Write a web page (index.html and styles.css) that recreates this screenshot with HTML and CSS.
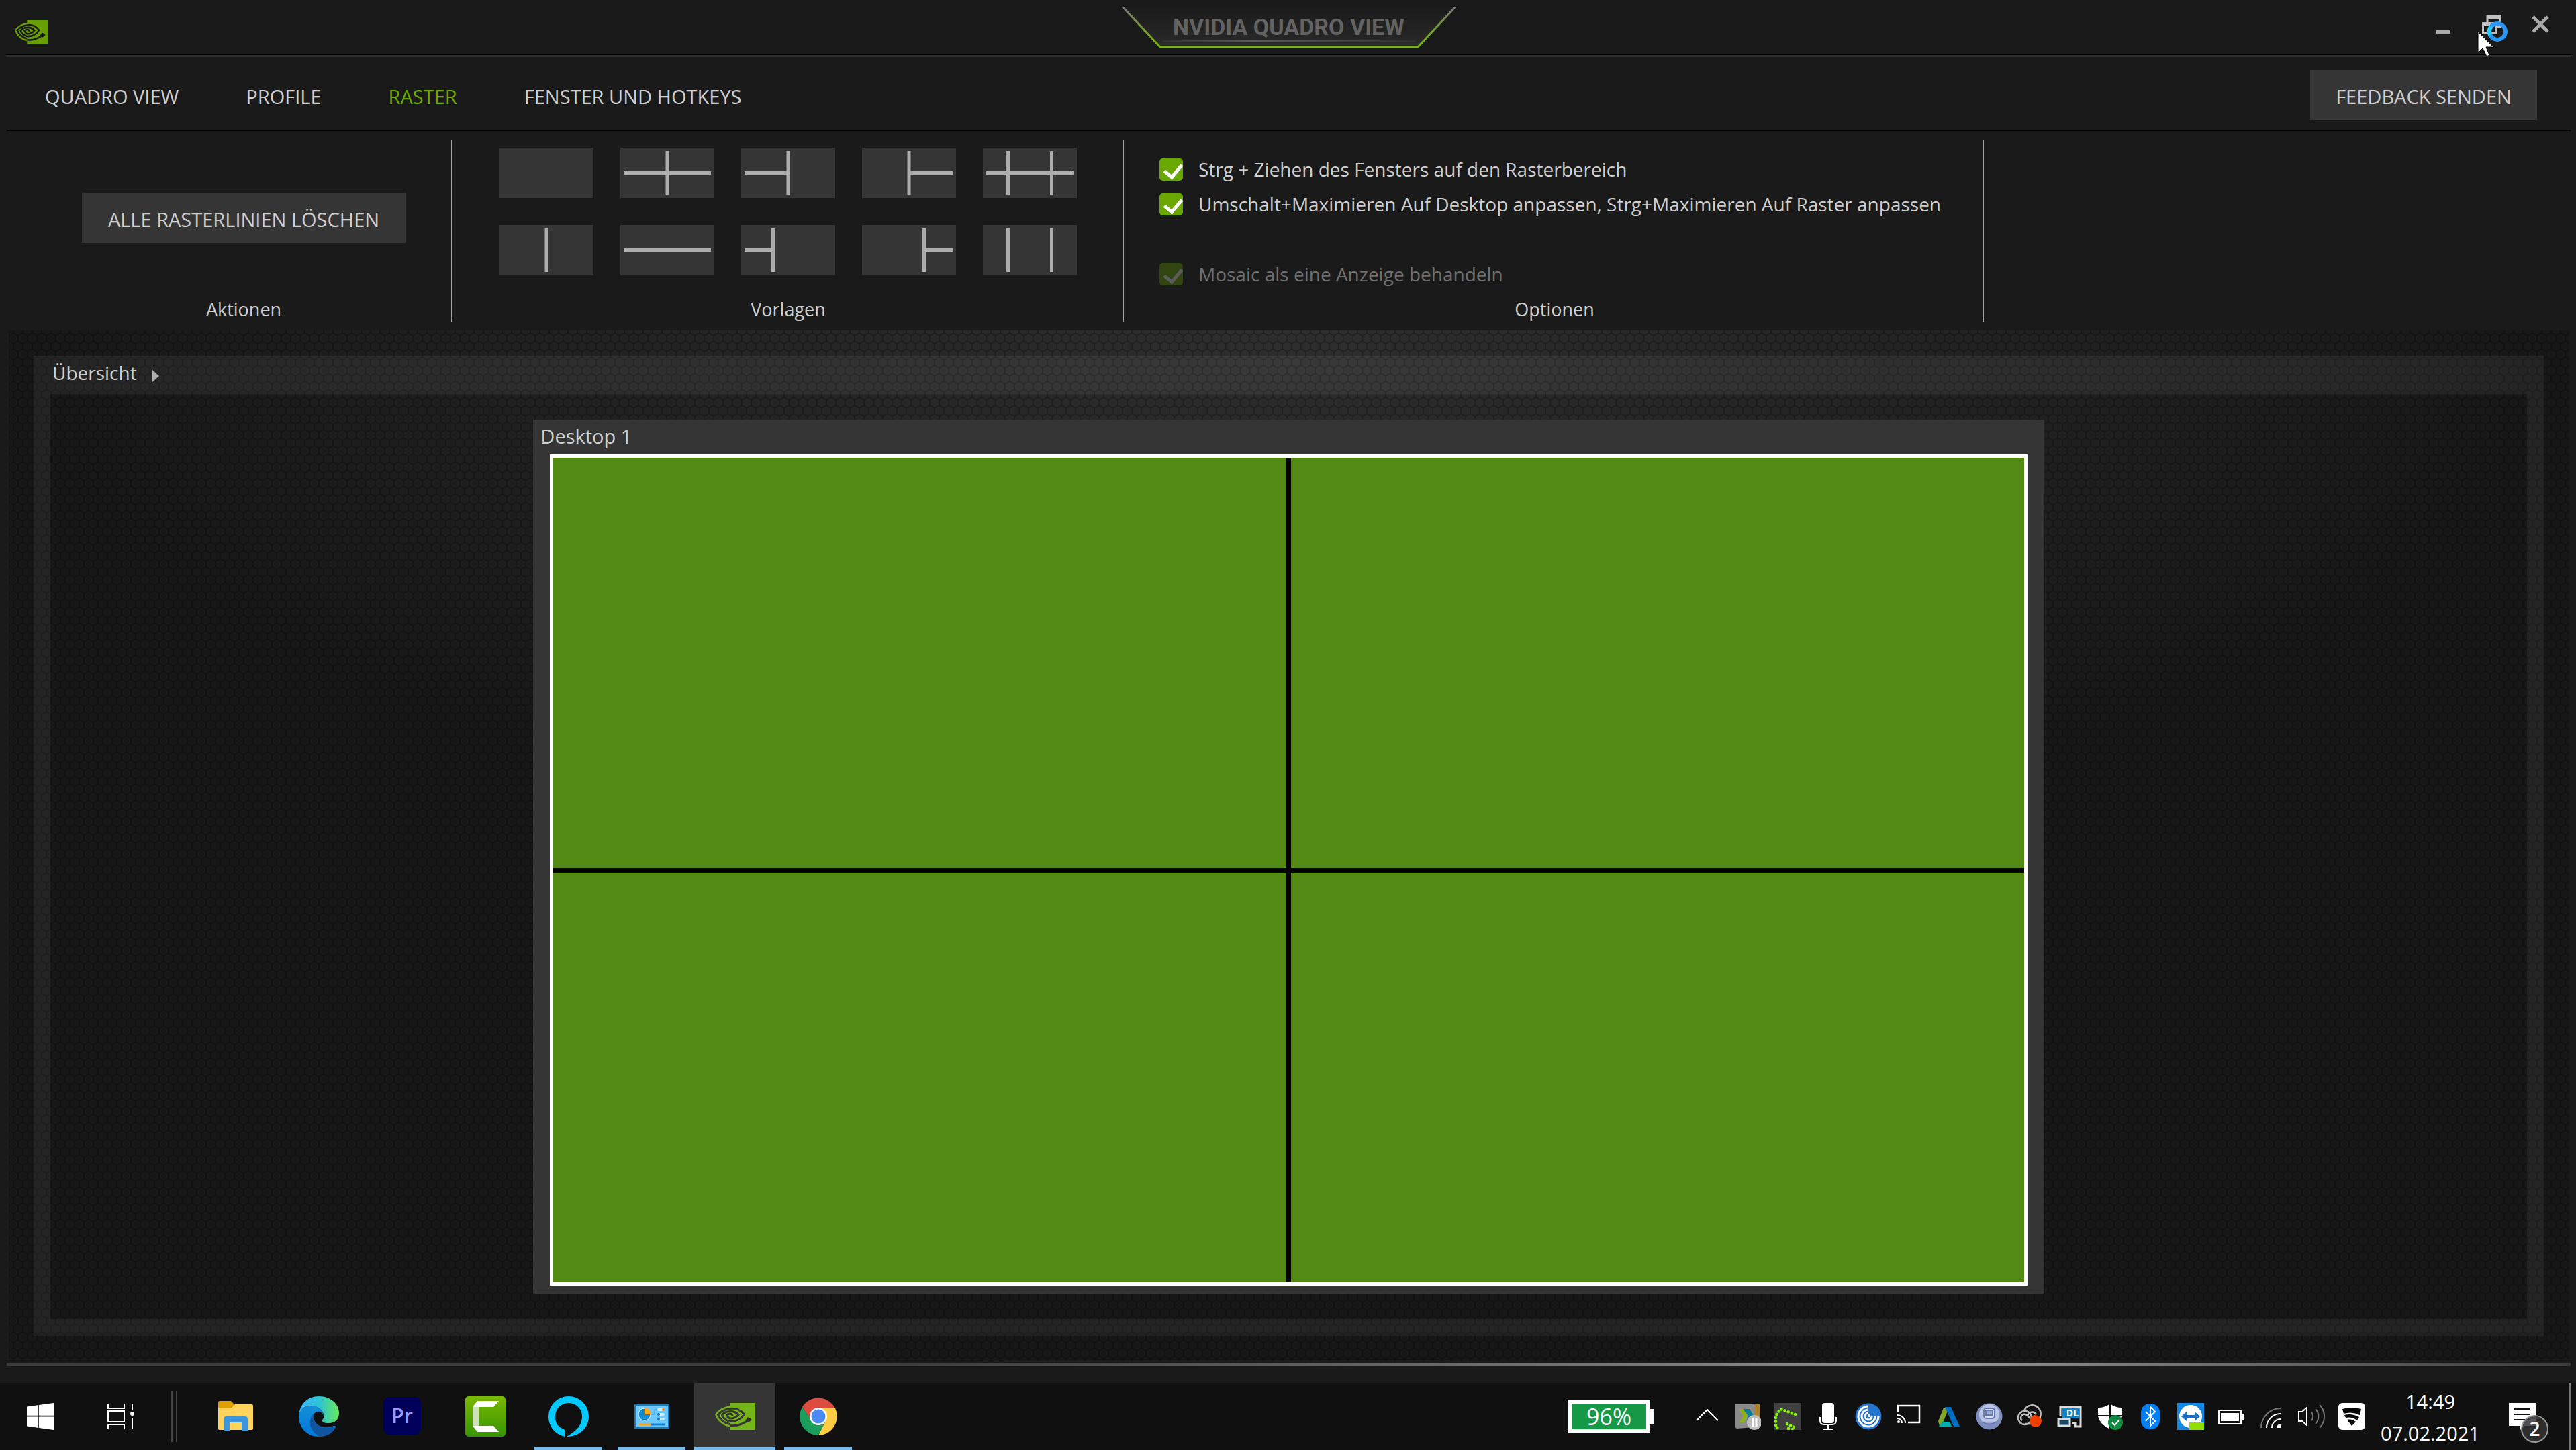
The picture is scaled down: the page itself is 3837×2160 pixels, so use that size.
FILE: index.html
```html
<!DOCTYPE html>
<html lang="de">
<head>
  <meta charset="UTF-8">
  <title>NVIDIA Quadro View</title>
  <link rel="stylesheet" href="styles.css">
</head>
<body>

<!-- shared shapes -->
<svg class="defs" aria-hidden="true">
  <symbol id="eye" viewBox="0 0 60 40">
    <path fill="currentColor" d="M22 0H60V40H22V35.500C11 34 3 26 0 17C5 10 12 5.500 22 4.500Z"/>
    <path class="eye-cut" d="M22 8.500C14 9.500 8 13 4.500 17.500C8 25 14 30 22 31.500M22 8.500C31 7 39 11 43.500 17C38 25 31 28 22 27.500C16 26 12 22 10.500 18C13 14.500 17 12.500 22 12.500C28 12 32 14 35 17.500C31 22 27 23.500 22 23C19 21.500 18 20 17.500 18C19 16.500 20.500 16 22 16C25 16 26 17.500 26 19"/>
    <path class="eye-cut" d="M22 33.500C33 35 43 31 53 23.500"/>
    <path class="eye-fill" d="M49 21L55 25L50 29L45 26Z"/>
  </symbol>
</svg>

<div class="window">
  <header class="titlebar">
    <svg class="app-logo" viewBox="0 0 60 40" preserveAspectRatio="none"><use href="#eye"/></svg>
    <div class="title-tab">
      <svg class="title-frame" viewBox="0 0 500 64">
        <defs>
          <linearGradient id="frame" x1="0" y1="0" x2="0" y2="1">
            <stop offset="0" stop-color="#777"/>
            <stop offset="1" stop-color="#76b900"/>
          </linearGradient>
          <linearGradient id="tabBg" x1="0" y1="0" x2="0" y2="1">
            <stop offset="0" stop-color="#1a1a1a"/>
            <stop offset="1" stop-color="#2a2a2a"/>
          </linearGradient>
          <linearGradient id="shine">
            <stop offset="0" stop-color="#303030"/>
            <stop offset=".35" stop-color="#5c5c5c"/>
            <stop offset="1" stop-color="#303030"/>
          </linearGradient>
        </defs>
        <path d="M2 0L58 60H442L498 0Z" fill="url(#tabBg)"/>
        <path d="M2 0L58 60H442L498 0" fill="none" stroke="url(#frame)" stroke-width="3"/>
        <rect x="61" y="50" width="378" height="3" fill="url(#shine)"/>
      </svg>
      <h1>NVIDIA QUADRO VIEW</h1>
    </div>
    <div class="window-buttons">
      <button aria-label="Minimieren"><svg viewBox="0 0 40 40"><path d="M12 31.500H32" stroke="#aaa" stroke-width="5"/></svg></button>
      <button aria-label="Verkleinern"><svg viewBox="0 0 40 40"><path d="M15 7V17M34.500 7V24H29" fill="none" stroke="#c0c0c0" stroke-width="3"/><path d="M14 9.500H36M7 19.500H29" stroke="#c0c0c0" stroke-width="5"/><path d="M8.500 19V32.500H27.500V19" fill="none" stroke="#c0c0c0" stroke-width="3"/></svg></button>
      <button aria-label="Schließen"><svg viewBox="0 0 40 40"><path d="M10 9L32 31M32 9L10 31" stroke="#aaa" stroke-width="5"/></svg></button>
    </div>
  </header>

  <nav class="menubar">
    <a href="#">QUADRO VIEW</a>
    <a href="#">PROFILE</a>
    <a href="#" class="active">RASTER</a>
    <a href="#">FENSTER UND HOTKEYS</a>
    <button class="btn feedback">FEEDBACK SENDEN</button>
  </nav>

  <div class="ribbon">
    <section class="group actions">
      <div class="group-body">
        <button class="btn clear">ALLE RASTERLINIEN LÖSCHEN</button>
      </div>
      <h2>Aktionen</h2>
    </section>

    <section class="group templates">
      <div class="group-body">
        <button aria-label="Leer"><svg viewBox="0 0 140 75"></svg></button>
        <button aria-label="2 x 2"><svg viewBox="0 0 140 75"><path d="M5 37.500H135M70 5V70"/></svg></button>
        <button aria-label="Links geteilt"><svg viewBox="0 0 140 75"><path d="M5 37.500H70M70 5V70"/></svg></button>
        <button aria-label="Rechts geteilt"><svg viewBox="0 0 140 75"><path d="M70 37.500H135M70 5V70"/></svg></button>
        <button aria-label="3 x 2"><svg viewBox="0 0 140 75"><path d="M5 37.500H135M37.500 5V70M102.500 5V70"/></svg></button>
        <button aria-label="2 Spalten"><svg viewBox="0 0 140 75"><path d="M70 5V70"/></svg></button>
        <button aria-label="2 Zeilen"><svg viewBox="0 0 140 75"><path d="M5 37.500H135"/></svg></button>
        <button aria-label="Schmal links geteilt"><svg viewBox="0 0 140 75"><path d="M5 37.500H48M47.500 5V70"/></svg></button>
        <button aria-label="Schmal rechts geteilt"><svg viewBox="0 0 140 75"><path d="M92 37.500H135M92.500 5V70"/></svg></button>
        <button aria-label="3 Spalten"><svg viewBox="0 0 140 75"><path d="M37.500 5V70M102.500 5V70"/></svg></button>
      </div>
      <h2>Vorlagen</h2>
    </section>

    <section class="group options">
      <div class="group-body">
        <label><input type="checkbox" checked>Strg + Ziehen des Fensters auf den Rasterbereich</label>
        <label><input type="checkbox" checked>Umschalt+Maximieren Auf Desktop anpassen, Strg+Maximieren Auf Raster anpassen</label>
        <label class="disabled"><input type="checkbox" checked disabled>Mosaic als eine Anzeige behandeln</label>
      </div>
      <h2>Optionen</h2>
    </section>
  </div>

  <main class="workspace">
    <svg class="mesh" aria-hidden="true">
      <defs>
        <pattern id="hex" width="14" height="24" patternUnits="userSpaceOnUse">
          <path d="M7 -4V4L0 8V16L7 20V28M7 4L14 8V16L7 20" fill="none" stroke="#000" stroke-opacity=".24" stroke-width="2"/>
        </pattern>
      </defs>
      <rect width="100%" height="100%" fill="url(#hex)"/>
    </svg>
    <div class="panel">
      <button class="overview">Übersicht <svg viewBox="0 0 12 20"><path d="M0 0L11 10L0 20Z" fill="#b0b0b0"/></svg></button>
      <div class="stage">
        <div class="display">
          <h3>Desktop 1</h3>
          <div class="grid">
            <div></div><div></div><div></div><div></div>
          </div>
        </div>
      </div>
    </div>
  </main>
  <div class="status-line"></div>
</div>

<footer class="taskbar">
  <button class="start" aria-label="Start"><svg viewBox="0 0 40 40"><path fill="#fff" d="M0 5.500L16 3.300V18.800H0ZM17.800 3L40 0V18.800H17.800ZM0 20.400H16V36.700L0 34.500ZM17.800 20.400H40V40L17.800 37Z"/></svg></button>
  <button class="start" aria-label="Aktive Anwendungen"><svg viewBox="0 0 40 40"><g fill="none" stroke="#fff" stroke-width="2"><path d="M1 1V8H25V1M1 39V32H25V39M1 12H25V28H1ZM37 1V10M37 22V39"/></g><circle cx="37" cy="16" r="3" fill="#fff"/></svg></button>
  <span class="divider"></span>

  <div class="apps">
    <button aria-label="Explorer"><svg viewBox="0 0 60 60">
      <path d="M4 9Q4 7 6 7H23L28 12V18H4Z" fill="#e0a000"/>
      <path d="M4 17H24L29 12H54Q56 12 56 14V48Q56 50 54 50H6Q4 50 4 48Z" fill="#ffd35c"/>
      <path d="M12 52V34Q12 30 16 30H44Q48 30 48 34V52H39V39H21V52Z" fill="#3c96de"/></svg></button>
    <button aria-label="Edge"><svg viewBox="0 0 60 60">
      <defs>
        <linearGradient id="edgeTop"><stop offset="0" stop-color="#3cb8ff"/><stop offset=".5" stop-color="#2cc3d5"/><stop offset="1" stop-color="#6ae85c"/></linearGradient>
        <linearGradient id="edgeBlue" x1="0" y1="0" x2="0" y2="1"><stop offset="0" stop-color="#168fd8"/><stop offset="1" stop-color="#0078dc"/></linearGradient>
      </defs>
      <path d="M0 30C1 12 13 0 30 0C47 0 60 11 60 25C60 35 53 40 45 40C37 40 33 38 36 34C38 31 38 28 36 24C33 18 25 14 17 14C8 14 2 20 0 30Z" fill="url(#edgeTop)"/>
      <path d="M0 30C2 19 9 14 18 14C28 14 36 20 37 29C33 19 22 22 22 30C22 41 32 48 44 46C50 45 55 42 55 46C50 55 40 60 30 60C13 60 0 47 0 30Z" fill="url(#edgeBlue)"/>
      <path d="M23 25C13 34 15 51 31 60C42 60 50 55 55 46Q56 44 53 45C37 50 22 42 22 31Z" fill="#0f559f"/></svg></button>
    <button aria-label="Premiere Pro"><svg viewBox="0 0 60 60">
      <rect x="2" y="1" width="56" height="56" rx="9" fill="#00005b"/>
      <text x="30" y="40" class="pr">Pr</text></svg></button>
    <button aria-label="Camtasia"><svg viewBox="0 0 60 60">
      <defs><linearGradient id="cam" x1="0" y1="0" x2="0" y2="1"><stop offset="0" stop-color="#7aba00"/><stop offset="1" stop-color="#369400"/></linearGradient></defs>
      <rect width="60" height="60" rx="5" fill="url(#cam)"/>
      <path d="M11 16H20V44H11Z" fill="#cbe3b5"/>
      <path d="M11 16L18 7H50L42 16ZM11 44H42L50 53H18Z" fill="#fff"/></svg></button>
    <button class="running" aria-label="Alexa"><svg viewBox="0 0 60 60">
      <path fill="#00caff" fill-rule="evenodd" d="M30 0A30 30 0 0 1 60 30C60 47 46 60 27 60C35 55 50 47 50 30A20 20 0 0 0 10 30C10 42 16 46 21 48Q25 50 25 53V60C10 57 0 45 0 30A30 30 0 0 1 30 0Z"/></svg></button>
    <button class="running" aria-label="Systemsteuerung"><svg viewBox="0 0 60 60">
      <rect x="5" y="13" width="50" height="34" fill="#6cc8ff" stroke="#1b79b6" stroke-width="2"/>
      <circle cx="19" cy="27" r="9" fill="#1587cc" stroke="#d8f1ff"/>
      <path d="M19 27V17A10 10 0 0 1 29 27Z" fill="#ffa91f"/>
      <path d="M29 27H34V20H40" fill="none" stroke="#3893ca"/>
      <g fill="#ccecff"><rect x="38" y="18" width="11" height="4" rx="2"/><rect x="38" y="25" width="11" height="4" rx="2"/><rect x="38" y="32" width="11" height="4" rx="2"/></g>
      <circle cx="47" cy="20" r="2" fill="#f07c10"/><circle cx="40" cy="27" r="2" fill="#1677b9"/><circle cx="40" cy="34" r="2" fill="#1677b9"/>
      <path d="M11 42H29" stroke="#ffa91f" stroke-width="3"/><path d="M29 42H49" stroke="#1587dc" stroke-width="3"/></svg></button>
    <button class="running current" aria-label="NVIDIA Quadro View"><svg class="eye-icon" viewBox="0 0 60 40"><use href="#eye"/></svg></button>
    <button class="running" aria-label="Chrome"><svg viewBox="0 0 60 60">
      <path d="M6 16A28 28 0 0 1 55 18H30V30L19 36Z" fill="#dd4b3e"/>
      <path d="M30 18H55A28 28 0 0 1 30 58L41 36Z" fill="#ffcd41"/>
      <path d="M6 16A28 28 0 0 0 30 58L41 36L19 36Z" fill="#1a9e5c"/>
      <circle cx="30" cy="30" r="13" fill="#fff"/><circle cx="30" cy="30" r="10.500" fill="#4a8af4"/></svg></button>
  </div>

  <div class="tray">
    <div class="battery"><span>96%</span></div>
    <div class="tray-icons">
      <svg viewBox="0 0 40 40"><path d="M4 26L20 10L36 26" fill="none" stroke="#fff" stroke-width="2"/></svg>
      <svg viewBox="0 0 40 40"><path d="M28 2H38V26H28Z" fill="#ad842f"/><path d="M1 1H30V36L4 38L1 36Z" fill="#8b8b8b"/><path d="M7 9H15L20 19L15 29H8L13 19Z" fill="#8eaf20"/><path d="M13 9H23L29 19L27 25H19L21 19L17 14Z" fill="#087e9b"/><circle cx="30" cy="29" r="11" fill="#c0c0c0"/><path d="M28 23V35M33 23V35" stroke="#fff" stroke-width="3"/></svg>
      <svg viewBox="0 0 40 40"><rect width="40" height="40" fill="#404040"/><path d="M31 17L9 9L2 19V36L9 39M19 31L29 36M21 38L28 40" fill="none" stroke="#84f500" stroke-width="4.500" stroke-linecap="round" stroke-dasharray=".1 5.400"/></svg>
      <svg viewBox="0 0 40 40"><rect x="11" width="18" height="30" rx="4" fill="#fff"/><path d="M8 21V26Q8 32 14 32H26Q32 32 32 26V21M20 32V39M13 39H27" fill="none" stroke="#fff" stroke-width="2"/></svg>
      <svg viewBox="0 0 40 40"><circle cx="20" cy="20" r="19.500" fill="#2375ce"/><path d="M20 5A15 15 0 1 0 35 20M20 10A10 10 0 1 0 30 20M20 15A5 5 0 1 0 25 20" fill="none" stroke="#fff" stroke-width="3"/><circle cx="21" cy="19" r="2" fill="#fff"/></svg>
      <svg viewBox="0 0 40 40"><path d="M4 14V4H36V29H19" fill="none" stroke="#fff" stroke-width="2.500"/><path d="M3 18A12 12 0 0 1 15 30M3 23A7 7 0 0 1 10 30" fill="none" stroke="#fff" stroke-width="2"/><circle cx="5" cy="28" r="2" fill="#fff"/></svg>
      <svg viewBox="0 0 40 40"><path d="M4 27L12 7H20L12 27L6 34Z" fill="#83a72d"/><path d="M14 6H23L36 35H27Z" fill="#006dc0"/><path d="M5 35L10 28H21L24 35Z" fill="#00afad"/></svg>
      <svg viewBox="0 0 40 40"><circle cx="20" cy="20" r="19.500" fill="#7f8fc0"/><circle cx="20" cy="17" r="15" fill="#b9c3e2"/><rect x="12" y="8" width="16" height="15" rx="4" fill="#dbe1f4" stroke="#6577ae" stroke-width="2"/><path d="M15 11H25V18H15ZM9 28Q20 35 31 28" fill="#a0aed7" stroke="#6577ae" stroke-width="2"/></svg>
      <svg viewBox="0 0 40 40"><g fill="none" stroke="#bebebe" stroke-width="2.500"><circle cx="13" cy="22" r="10"/><path d="M12 12A12 12 0 0 1 36 20A12 12 0 0 1 28 31H13"/><path d="M9 26A5 5 0 0 1 9 18Q13 15 17 19L25 27M17 20A7 7 0 0 1 30 17"/></g><circle cx="29" cy="27" r="9" fill="#ed4000"/></svg>
      <svg viewBox="0 0 40 40"><path d="M6 19V6H36V35H28V30H23" fill="none" stroke="#ddd" stroke-width="3"/><rect x="8" y="8" width="26" height="15" fill="#1582bf"/><text x="24" y="20" class="dl">DL</text><rect x="3" y="24" width="17" height="10" fill="#164464" stroke="#ddd" stroke-width="3"/></svg>
      <svg viewBox="0 0 40 40"><path d="M2 7Q13 7 20 1Q27 7 38 7V20Q35 32 20 39Q5 32 2 20Z" fill="#fff"/><path d="M20 1V39M2 19H38" stroke="#101010" stroke-width="2"/><circle cx="28" cy="29" r="11" fill="#128b42"/><path d="M23 29L27 33L34 25" fill="none" stroke="#fff" stroke-width="2"/></svg>
      <svg viewBox="0 0 40 40"><rect x="6" y="1" width="28" height="38" rx="13" fill="#007ff8"/><path d="M13 13L27 27L20 34V6L27 13L13 27" fill="none" stroke="#fff" stroke-width="2"/></svg>
      <svg viewBox="0 0 40 40"><rect width="40" height="40" fill="#1288e4"/><circle cx="20" cy="20" r="17" fill="#fff"/><path d="M6 20L14 13V18H26V13L34 20L26 27V22H14V27Z" fill="#196fc6"/><rect x="18" y="29" width="22" height="11" fill="#8fdf00"/></svg>
      <svg viewBox="0 0 40 40"><path d="M2 11H35V31H2Z" fill="none" stroke="#fff" stroke-width="2"/><path d="M5 15H32V27H5ZM36 17H39V25H36Z" fill="#fff"/></svg>
      <svg viewBox="0 0 40 40"><path d="M5 37A29 29 0 0 1 34 8" fill="none" stroke="#777" stroke-width="2"/><path d="M13 37A21 21 0 0 1 34 16M21 37A13 13 0 0 1 34 24" fill="none" stroke="#fff" stroke-width="2"/><path d="M28 37A6 6 0 0 1 34 31V37Z" fill="#fff"/></svg>
      <svg viewBox="0 0 40 40"><path d="M1 13H6L13 7V33L6 27H1Z" fill="none" stroke="#fff" stroke-width="2"/><path d="M20 14A9 9 0 0 1 20 26M26 9A16 16 0 0 1 26 31M32 3A24 24 0 0 1 32 37" fill="none" stroke="#777" stroke-width="2"/></svg>
      <svg viewBox="0 0 40 40"><rect width="40" height="40" rx="6" fill="#fff"/><path d="M6 9Q20 5 34 9L32 18Q20 12 8 16ZM9 18Q20 15 31 21L28 26Q20 20 11 22ZM13 25Q20 23 26 28L20 34Z" fill="#050505"/></svg>
    </div>
    <div class="clock"><time>14:49</time><span>07.02.2021</span></div>
    <button class="notify" aria-label="Benachrichtigungen">
      <svg viewBox="0 0 40 40"><path d="M0 0H40V34H24L17 40V34H0Z" fill="#fff"/><path d="M8 9H32M8 17H32M8 25H32" stroke="#101010" stroke-width="2"/></svg>
      <span class="badge">2</span>
    </button>
    <span class="show-desktop"></span>
  </div>
</footer>

<!-- busy pointer over the restore button -->
<svg class="pointer" viewBox="0 0 48 56">
  <circle cx="30" cy="17" r="12" fill="none" stroke="#2b95f4" stroke-width="6"/>
  <path d="M19 22A12 12 0 0 1 21 9" fill="none" stroke="#23cdff" stroke-width="6"/>
  <path d="M1 17V49L8 42L14 54L18 52L13 40H24Z" fill="#fff" stroke="#000"/>
</svg>

</body>
</html>
```
FILE: styles.css
```css
* {
  box-sizing: border-box;
}

body {
  margin: 0;
  min-height: 100vh;
  display: flex;
  flex-direction: column;
  font-family: "Open Sans", "Noto Sans", sans-serif;
  font-size: 29px;
  line-height: 40px;
  background: #1a1a1a;
  color: #cfcfcf;
}

button {
  font: inherit;
  color: inherit;
  background: none;
  border: none;
  padding: 0;
}

h1, h2, h3 {
  margin: 0;
  font-size: inherit;
  font-weight: normal;
}

svg {
  display: block;
}

.defs {
  position: absolute;
  width: 0;
  height: 0;
}

.eye-cut {
  fill: none;
  stroke: var(--cut, #1a1a1a);
  stroke-width: 3;
}

.eye-fill {
  fill: var(--cut, #1a1a1a);
}

.window {
  flex: 1;
  display: flex;
  flex-direction: column;
  padding: 0 8px 25px 10px;
}

/* Title bar */
.titlebar {
  display: grid;
  grid-template-columns: 1fr auto 1fr;
  height: 85px;
  border-bottom: 3px solid #292929;
  box-shadow: inset 0 -2px #000;
}

.app-logo {
  width: 50px;
  height: 35px;
  margin: 30px 0 0 12px;
  color: #679e00;
}

.title-tab {
  display: grid;
  padding-top: 10px;
}

.title-frame,
.title-tab h1 {
  grid-area: 1 / 1;
}

.title-frame {
  width: 500px;
  height: 64px;
}

.title-tab h1 {
  padding-top: 10px;
  font-family: Roboto, sans-serif;
  font-size: 34px;
  font-weight: bold;
  text-align: center;
  color: #636363;
}

.window-buttons {
  display: flex;
  justify-content: flex-end;
  align-items: flex-start;
  gap: 33px;
  padding: 16px 26px 0 0;
}

.window-buttons svg {
  width: 40px;
  height: 40px;
}

/* Menu */
.menubar {
  display: flex;
  align-items: center;
  gap: 100px;
  height: 110px;
  padding: 5px 50px 0 57px;
  border-bottom: 2px solid #000;
}

.menubar a {
  padding-top: 4px;
  color: inherit;
  text-decoration: none;
}

.menubar .active {
  color: #6aa800;
}

.btn {
  height: 75px;
  padding-top: 4px;
  background: #353535;
}

.feedback {
  width: 338px;
  margin-left: auto;
}

/* Ribbon */
.ribbon {
  display: flex;
  height: 297px;
  padding-top: 13px;
}

.group {
  display: flex;
  flex-direction: column;
  height: 271px;
  border-right: 2px solid #a5a5a5;
  text-align: center;
}

.group-body {
  height: 235px;
  flex-shrink: 0;
}

.group h2 {
  font-size: 27px;
  line-height: 36px;
}

.actions {
  width: 664px;
  padding-left: 44px;
}

.clear {
  width: 482px;
  margin-top: 79px;
}

.templates {
  width: 1000px;
  padding: 0 68px 0 70px;
}

.templates .group-body {
  display: grid;
  grid-template-columns: repeat(5, 140px);
  grid-auto-rows: 75px;
  gap: 40px;
  padding-top: 12px;
}

.templates button {
  background: #353535;
}

.templates svg {
  width: 140px;
  height: 75px;
  stroke: #adadad;
  stroke-width: 5;
}

.options {
  width: 1281px;
  padding: 0 49px 0 53px;
}

.options .group-body {
  display: grid;
  grid-template-rows: repeat(4, 52px);
  padding-top: 18px;
}

.options label {
  display: flex;
  align-items: center;
  gap: 23px;
  font-size: 28px;
  white-space: nowrap;
}

.options .disabled {
  grid-row: 4;
  color: #707070;
}

.options input {
  appearance: none;
  width: 35px;
  height: 33px;
  margin: 0;
  border-radius: 5px;
  background: #6aa800;
}

.options input::after {
  content: "";
  display: block;
  width: 12px;
  height: 21px;
  margin: 3px 0 0 12px;
  border: solid #fff;
  border-width: 0 5px 5px 0;
  transform: rotate(40deg);
}

.options input:disabled {
  background: #30450f;
}

.options input:disabled::after {
  border-color: #5c5c5c;
}

/* Workspace */
.workspace {
  position: relative;
  flex: 1;
  display: flex;
  margin: 0 2px 3px 3px;
  padding: 38px 38px 37px 37px;
  background: radial-gradient(ellipse 50% 50% at 50% 0, #2e2e2e, #171717);
}

.mesh {
  position: absolute;
  inset: 0;
  width: 100%;
  height: 100%;
}

.panel {
  position: relative;
  flex: 1;
  display: flex;
  flex-direction: column;
  border: solid rgba(255, 255, 255, .06);
  border-width: 0 25px 25px;
}

.overview {
  display: flex;
  align-items: center;
  gap: 22px;
  height: 57px;
  padding: 0 0 8px 3px;
  font-size: 28px;
  background: rgba(255, 255, 255, .06);
}

.overview svg {
  width: 12px;
  height: 20px;
  margin-top: 10px;
}

.stage {
  flex: 1;
  display: flex;
  justify-content: center;
  padding: 38px 0;
}

.display {
  width: 61%;
  display: flex;
  flex-direction: column;
  padding: 5px 25px 12px;
  background: #353535;
}

.display h3 {
  margin: 0 0 7px -14px;
}

.grid {
  flex: 1;
  display: grid;
  grid-template-columns: 1fr 1fr;
  grid-template-rows: 1fr 1fr;
  gap: 7px;
  background: #000;
  border: 5px solid #fff;
}

.grid div {
  background: #528a14;
}

.status-line {
  height: 5px;
  background: linear-gradient(90deg, #3a3a3a 35%, #959595 76%, #3a3a3a);
}

/* Taskbar */
.taskbar {
  display: flex;
  height: 100px;
  background: #101010;
  color: #fff;
}

.start {
  width: 120px;
  display: grid;
  place-items: center;
}

.start svg {
  width: 40px;
  height: 40px;
}

.divider {
  width: 9px;
  margin: 12px 36px 12px 15px;
  border: solid #444;
  border-width: 0 2px;
}

.apps {
  display: flex;
  gap: 23px;
}

.apps button {
  display: grid;
  place-items: center;
  width: 101px;
}

.apps svg {
  width: 60px;
  height: 60px;
}

.apps .eye-icon {
  height: 40px;
  color: #76b51a;
  --cut: #353535;
}

.apps .running {
  box-shadow: inset 0 -5px #76b9ed;
}

.apps .current {
  width: 121px;
  margin: 0 -10px;
  background: #353535;
}

.pr {
  fill: #9999ff;
  font-size: 31px;
  font-weight: 600;
  text-anchor: middle;
}

.dl {
  fill: #fff;
  font-size: 14px;
  font-weight: bold;
  text-anchor: middle;
}

.tray {
  display: flex;
  align-items: center;
  margin-left: auto;
}

.battery {
  position: relative;
  width: 123px;
  height: 50px;
  margin-right: 55px;
  border: 6px solid #fff;
  background: #159947;
  font-size: 34px;
  line-height: 38px;
  text-align: center;
}

.battery::after {
  content: "";
  position: absolute;
  left: 117px;
  top: 8px;
  width: 5px;
  height: 22px;
  background: #fff;
}

.tray-icons {
  display: flex;
  gap: 20px;
  padding: 0 10px;
}

.tray-icons svg {
  width: 40px;
  height: 40px;
}

.clock {
  width: 174px;
  display: flex;
  flex-direction: column;
  padding-top: 2px;
  text-align: center;
  line-height: 47px;
}

.notify {
  position: relative;
  width: 40px;
  margin: 0 50px 0 30px;
}

.notify svg {
  width: 40px;
  height: 40px;
}

.badge {
  position: absolute;
  left: 18px;
  top: 18px;
  width: 41px;
  height: 41px;
  border: 2px solid #999;
  border-radius: 50%;
  background: rgba(50, 50, 50, .85);
  font-size: 28px;
  font-weight: 600;
  line-height: 37px;
}

.show-desktop {
  align-self: stretch;
  width: 10px;
  border-left: 3px solid #777;
}

.pointer {
  position: absolute;
  left: calc(100% - 147px);
  top: 30px;
  width: 48px;
  height: 56px;
}
```
